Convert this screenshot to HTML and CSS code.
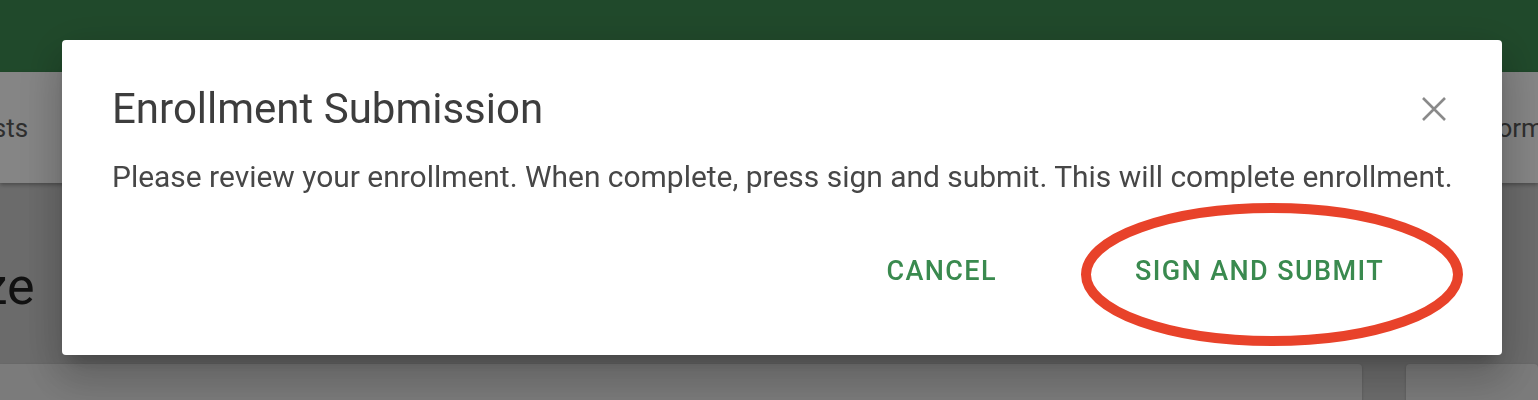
FILE: index.html
```html
<!DOCTYPE html>
<html>

<head>
    <title>Enrollment Submission</title>
    <meta name="viewport" content="width=device-width, minimum-scale=1.0" />
    <link rel="stylesheet" href="styles.css">
</head>

<body>
    <div class="header"></div>
    <div class="tabs">
        <span class="tab tab-first">Requests</span>
        <span class="tab tab-last">Information</span>
    </div>
    <div class="content">
        <h2 class="page-title">Finalize</h2>
        <div class="cards">
            <div class="card card-main"></div>
            <div class="card card-side"></div>
        </div>
    </div>

    <div class="backdrop"></div>
    <div class="dialog">
        <div class="dialog-hd">
            <h1 class="dialog-title">Enrollment Submission</h1>
            <button class="close-btn">
                <svg width="24" height="24" viewBox="0 0 24 24">
                    <path d="M1 1 L23 23 M23 1 L1 23" stroke="#8a8a8a" stroke-width="2.6" fill="none" />
                </svg>
            </button>
        </div>
        <p class="dialog-text">Please review your enrollment. When complete, press sign and submit. This will complete enrollment.</p>
        <div class="dialog-actions">
            <button class="btn">CANCEL</button>
            <button class="btn">SIGN AND SUBMIT</button>
        </div>
        <!-- red marker round the submit button -->
        <svg class="marker" width="382" height="143" viewBox="0 0 382 143">
            <ellipse cx="191" cy="71.5" rx="186" ry="66.5" stroke="#e8422a" stroke-width="10" fill="none" />
        </svg>
    </div>
</body>

</html>
```

FILE: styles.css
```css
body {
    margin: 0;
    height: 400px;
    overflow: hidden;
    font-family: Roboto, "Liberation Sans", sans-serif;
    background: #cecece;
}

.header {
    height: 72px;
    background: #3f8d53;
}

.tabs {
    display: flex;
    justify-content: space-between;
    align-items: center;
    height: 111px;
    background: #fff;
    box-shadow: 0 2px 4px rgba(0, 0, 0, 0.3);
    position: relative;
    overflow: hidden;
}

.tab {
    font-size: 26px;
    color: #5a5a5a;
}

.tab-first {
    margin-left: -80px;
}

.tab-last {
    margin-right: -64px;
}

.content {
    padding-top: 74px;
}

.page-title {
    margin: 0 0 47px -142px;
    font-size: 52px;
    font-weight: 400;
    line-height: 60px;
    color: #222;
}

.cards {
    display: flex;
    gap: 44px;
}

.card {
    height: 60px;
    background: #ebebeb;
    border-radius: 4px;
    box-shadow: 0 1px 3px rgba(0, 0, 0, 0.2);
}

.card-main {
    width: 1362px;
    border-radius: 0 4px 4px 0;
}

.card-side {
    flex: 1;
}

.backdrop {
    position: fixed;
    left: 0;
    top: 0;
    right: 0;
    bottom: 0;
    background: rgba(0, 0, 0, 0.48);
}

.dialog {
    position: fixed;
    left: 62px;
    top: 40px;
    width: 1440px;
    height: 315px;
    box-sizing: border-box;
    padding: 48px 50px 0;
    background: #fff;
    border-radius: 4px;
    box-shadow: 0 11px 15px -7px rgba(0, 0, 0, 0.2), 0 24px 38px 3px rgba(0, 0, 0, 0.14), 0 9px 46px 8px rgba(0, 0, 0, 0.12);
}

.dialog-hd {
    display: flex;
    justify-content: space-between;
    align-items: center;
}

.dialog-title {
    margin: 0;
    font-size: 42px;
    font-weight: 400;
    line-height: 42px;
    color: #3d3d3d;
}

.close-btn {
    border: 0;
    background: none;
    padding: 0;
    margin-right: 6px;
    display: flex;
}

.dialog-text {
    margin: 29px -10px 0 0;
    font-size: 29.95px;
    line-height: 36px;
    white-space: nowrap;
    color: #474747;
}

.dialog-actions {
    display: flex;
    justify-content: flex-end;
    gap: 90px;
    margin: 52px 44px 0 0;
}

.btn {
    border: 0;
    background: none;
    padding: 8px 24px;
    font-family: Roboto, "Liberation Sans", sans-serif;
    font-size: 27px;
    font-weight: 500;
    letter-spacing: 1.4px;
    color: #3a8a4f;
}

.marker {
    position: absolute;
    left: 1019px;
    top: 163px;
}
```
